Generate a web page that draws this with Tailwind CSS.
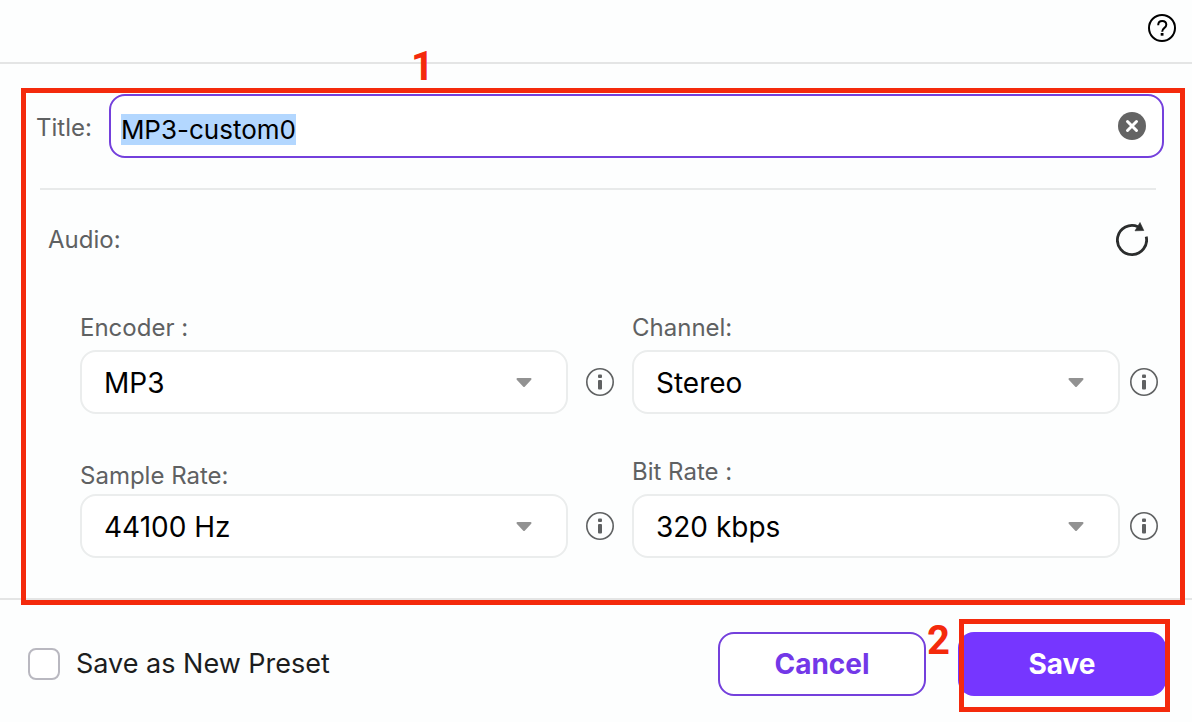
<!DOCTYPE html>
<html lang="en">
<head>
<meta charset="utf-8">
<meta name="viewport" content="width=device-width, initial-scale=1">
<title>Custom Preset</title>
<script src="https://cdn.jsdelivr.net/npm/@tailwindcss/browser@4"></script>
</head>
<body class="min-h-screen bg-[#fdfefe] font-[Inter,sans-serif] text-[28px] text-black">
  <header class="flex h-16 items-start justify-end border-b-2 border-[#e4e5e5] px-4 pt-[14px]">
    <button type="button" aria-label="Help" class="block">
      <svg class="block size-7" viewBox="0 0 28 28" fill="none" stroke="#000" stroke-width="2">
        <circle cx="14" cy="14" r="13"/>
        <path d="M10.200 11.200c0-2.700 1.700-4.300 4-4.300s4.100 1.500 4.100 3.800c0 1.600-.8 2.400-2.100 3.400-1.300 1-2 1.700-2 3.600"/>
        <path d="M14.100 19v2.700" stroke-width="2.800"/>
      </svg>
    </button>
  </header>

  <main class="relative border-b-2 border-[#e4e5e5] pt-[30px] pb-10">
    <div class="flex items-center gap-[17px] pr-7 pl-9">
      <label for="title" class="pt-1 text-2xl text-[#5f6162]">Title:</label>
      <div class="relative min-w-0 flex-1">
        <input id="title" type="text" value="MP3-custom0" autofocus class="block h-16 w-full rounded-2xl border-2 border-[#7440dc] bg-white pt-[6px] pr-16 pl-[10px] text-[26px] leading-[34px] outline-none selection:bg-[#b3d7ff] selection:text-black">
        <button type="button" aria-label="Clear title" class="absolute top-[18px] right-[18px]">
          <svg class="block size-7" viewBox="0 0 28 28">
            <circle cx="14" cy="14" r="14" fill="#646464"/>
            <path d="M9.500 9.500l9 9M18.500 9.500l-9 9" stroke="#fff" stroke-width="3" stroke-linecap="round"/>
          </svg>
        </button>
      </div>
    </div>

    <hr class="mt-[30px] mr-9 ml-10 border-t-2 border-[#e8eaea]">

    <div class="mt-[30px] flex h-10 items-center justify-between pr-11 pl-12">
      <h2 class="text-2xl text-[#5f6162]">Audio:</h2>
      <button type="button" aria-label="Reset audio settings">
        <svg class="block h-9 w-8" viewBox="0 0 32 36">
          <path d="M30.200 14.600A14.600 14.600 0 1 1 22 4.700" fill="none" stroke="#2b2d2d" stroke-width="2.800"/>
          <path d="M24 .5l3.800 8-8.800.3z" fill="#2b2d2d" stroke="#2b2d2d" stroke-width=".6" stroke-linejoin="round"/>
        </svg>
      </button>
    </div>

    <div class="mt-[52px] grid grid-cols-[1fr_64px_1fr_38px] gap-y-[42px] pr-[34px] pl-20">
      <div class="flex flex-col justify-end gap-[6px]">
        <label for="encoder" class="text-2xl text-[#5f6162]">Encoder :</label>
        <div class="relative">
          <select id="encoder" class="block h-16 w-full appearance-none rounded-2xl border-2 border-[#ebeded] bg-white pt-[2px] pr-16 pl-[22px]"><option>MP3</option></select>
          <svg class="pointer-events-none absolute top-7 right-9 h-[10px] w-4" viewBox="0 0 16 10"><path d="M1.500 1h13L8 8z" fill="#929292" stroke="#929292" stroke-width="2" stroke-linejoin="round"/></svg>
        </div>
      </div>
      <div class="flex h-16 items-center justify-center self-end">
        <button type="button" aria-label="About encoder"><svg class="block size-7" viewBox="0 0 28 28"><circle cx="14" cy="14" r="13.200" fill="none" stroke="#5f6162" stroke-width="1.600"/><rect x="12" y="6.500" width="4" height="3.500" rx="1" fill="#5f6162"/><rect x="12" y="12" width="4" height="9.500" rx="1" fill="#5f6162"/></svg></button>
      </div>
      <div class="flex flex-col justify-end gap-[6px]">
        <label for="channel" class="text-2xl text-[#5f6162]">Channel:</label>
        <div class="relative">
          <select id="channel" class="block h-16 w-full appearance-none rounded-2xl border-2 border-[#ebeded] bg-white pt-[2px] pr-16 pl-[22px]"><option>Stereo</option></select>
          <svg class="pointer-events-none absolute top-7 right-9 h-[10px] w-4" viewBox="0 0 16 10"><path d="M1.500 1h13L8 8z" fill="#929292" stroke="#929292" stroke-width="2" stroke-linejoin="round"/></svg>
        </div>
      </div>
      <div class="flex h-16 items-center justify-end self-end">
        <button type="button" aria-label="About channel"><svg class="block size-7" viewBox="0 0 28 28"><circle cx="14" cy="14" r="13.200" fill="none" stroke="#5f6162" stroke-width="1.600"/><rect x="12" y="6.500" width="4" height="3.500" rx="1" fill="#5f6162"/><rect x="12" y="12" width="4" height="9.500" rx="1" fill="#5f6162"/></svg></button>
      </div>

      <div class="flex flex-col justify-end gap-[2px]">
        <label for="sample-rate" class="text-2xl text-[#5f6162]">Sample Rate:</label>
        <div class="relative">
          <select id="sample-rate" class="block h-16 w-full appearance-none rounded-2xl border-2 border-[#ebeded] bg-white pt-[2px] pr-16 pl-[22px]"><option>44100 Hz</option></select>
          <svg class="pointer-events-none absolute top-7 right-9 h-[10px] w-4" viewBox="0 0 16 10"><path d="M1.500 1h13L8 8z" fill="#929292" stroke="#929292" stroke-width="2" stroke-linejoin="round"/></svg>
        </div>
      </div>
      <div class="flex h-16 items-center justify-center self-end">
        <button type="button" aria-label="About sample rate"><svg class="block size-7" viewBox="0 0 28 28"><circle cx="14" cy="14" r="13.200" fill="none" stroke="#5f6162" stroke-width="1.600"/><rect x="12" y="6.500" width="4" height="3.500" rx="1" fill="#5f6162"/><rect x="12" y="12" width="4" height="9.500" rx="1" fill="#5f6162"/></svg></button>
      </div>
      <div class="flex flex-col justify-end gap-[6px]">
        <label for="bit-rate" class="text-2xl text-[#5f6162]">Bit Rate :</label>
        <div class="relative">
          <select id="bit-rate" class="block h-16 w-full appearance-none rounded-2xl border-2 border-[#ebeded] bg-white pt-[2px] pr-16 pl-[22px]"><option>320 kbps</option></select>
          <svg class="pointer-events-none absolute top-7 right-9 h-[10px] w-4" viewBox="0 0 16 10"><path d="M1.500 1h13L8 8z" fill="#929292" stroke="#929292" stroke-width="2" stroke-linejoin="round"/></svg>
        </div>
      </div>
      <div class="flex h-16 items-center justify-end self-end">
        <button type="button" aria-label="About bit rate"><svg class="block size-7" viewBox="0 0 28 28"><circle cx="14" cy="14" r="13.200" fill="none" stroke="#5f6162" stroke-width="1.600"/><rect x="12" y="6.500" width="4" height="3.500" rx="1" fill="#5f6162"/><rect x="12" y="12" width="4" height="9.500" rx="1" fill="#5f6162"/></svg></button>
      </div>
    </div>

    <!-- Step 1 callout -->
    <div class="pointer-events-none absolute top-6 right-[7px] -bottom-[7px] left-[21px] border-[5px] border-[#f42a0c]"></div>
    <span class="absolute -top-5 left-[411px] font-[Roboto,sans-serif] text-[40px] leading-[46px] font-bold text-[#f42a0c]">1</span>
  </main>

  <footer class="flex items-center justify-between pt-8 pr-[26px] pb-[26px] pl-7">
    <label class="flex items-center gap-4 text-[27px] text-[#1c1d1d]">
      <input type="checkbox" class="size-8 appearance-none rounded-lg border-2 border-[#b9b8c0] bg-white checked:bg-[#7636ff]">
      Save as New Preset
    </label>
    <div class="flex gap-8">
      <button type="button" class="h-16 w-52 rounded-2xl border-2 border-[#7440dc] bg-white font-bold text-[#7338e8]">Cancel</button>
      <div class="relative">
        <button type="button" class="block h-16 w-52 rounded-2xl bg-[#7636ff] font-bold text-white">Save</button>
        <!-- Step 2 callout -->
        <div class="pointer-events-none absolute -top-[13px] -right-1 -bottom-4 left-px border-[5px] border-[#f42a0c]"></div>
        <span class="absolute -top-[14px] -left-[31px] font-[Roboto,sans-serif] text-[40px] leading-[46px] font-bold text-[#f42a0c]">2</span>
      </div>
    </div>
  </footer>
  <script>
    const title = document.getElementById('title');
    title.focus();
    title.select();
  </script>
</body>
</html>
